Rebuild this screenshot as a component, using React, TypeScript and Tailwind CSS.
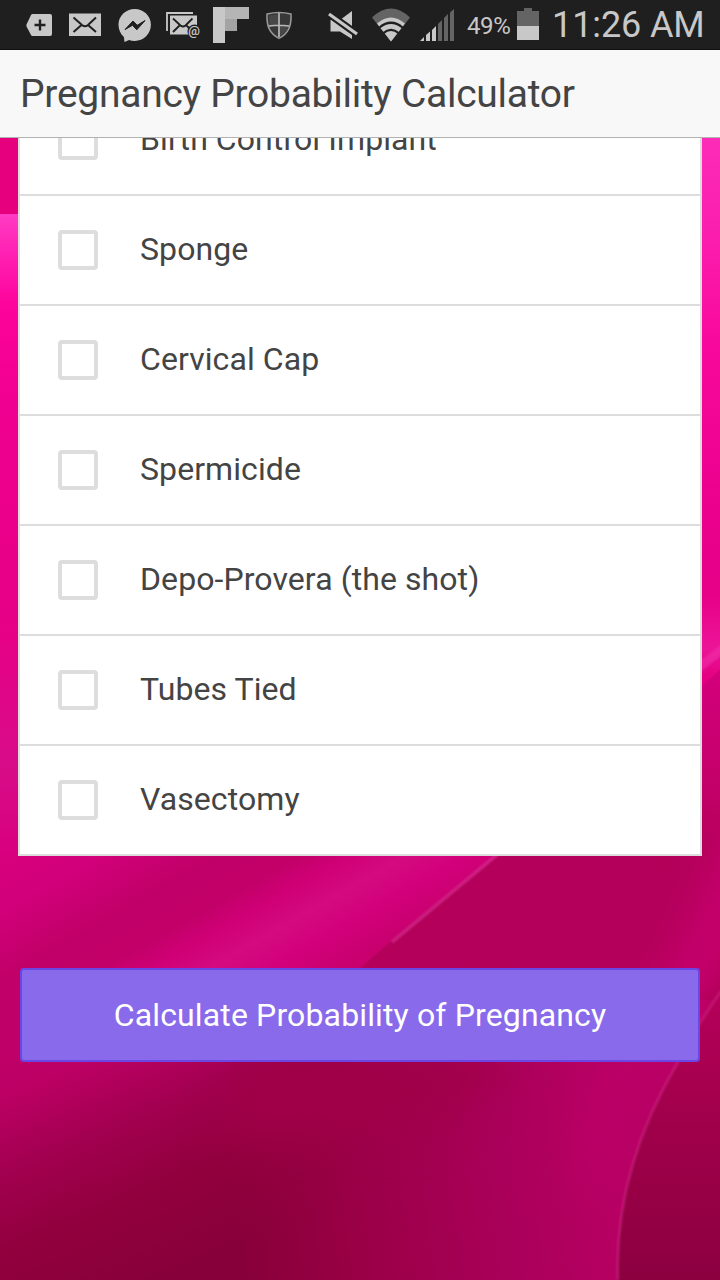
import { useState } from 'react';

const METHODS = [
  'Birth Control Implant',
  'Sponge',
  'Cervical Cap',
  'Spermicide',
  'Depo-Provera (the shot)',
  'Tubes Tied',
  'Vasectomy',
];

// Status bar icons share one coordinate space, each one shows its own slice
function StatusIcons() {
  return (
    <>
      <svg className="ml-[26px] shrink-0" width="26" height="50" viewBox="26 0 26 50">
        <path d="M32.500 14H50a2 2 0 0 1 2 2v18a2 2 0 0 1-2 2H32.500a2 2 0 0 1-1.500-1L26.500 26.500v-2L31 15a2 2 0 0 1 1.500-1z" fill="#c8c8c8" />
        <path d="M40 19.500v11M34.500 25h11" stroke="#1f1f1f" strokeWidth="2.400" />
      </svg>
      <svg className="ml-[17px] shrink-0" width="32" height="50" viewBox="69 0 32 50">
        <path d="M69 13.500h32v22.500H69z" fill="#c8c8c8" />
        <path d="M73.500 17.500l8.500 7.500q3 2.500 6 0l8-7.500M73.500 32l8-7M96 32l-8-7" fill="none" stroke="#1f1f1f" strokeWidth="2" />
      </svg>
      <svg className="ml-[17px] shrink-0" width="33" height="50" viewBox="118 0 33 50">
        <path d="M134.700 9c9 0 16.200 7 16.200 15.800S143.700 41 134.700 41c-2 0-3.800-.4-5.600-1l-4.600 2-.6-5c-3.400-2.900-5.400-7.300-5.400-12.200C118.500 16 125.700 9 134.700 9z" fill="#c8c8c8" />
        <path d="M125 29.500l8-8.500 4.200 4.300 7.800-4.700-8.200 9.200-4.300-4.500z" fill="#1f1f1f" stroke="#1f1f1f" strokeWidth="1" />
      </svg>
      <svg className="ml-[15px] shrink-0" width="35" height="50" viewBox="166 0 35 50">
        <path d="M167 31V13h26" fill="none" stroke="#c8c8c8" strokeWidth="1.800" />
        <path d="M170 15.500h27v19h-27z" fill="#c8c8c8" />
        <path d="M173 18.500l7.500 7q2.500 2 5 0l7-7M173 32l7-7M193 32l-7-7" fill="none" stroke="#1f1f1f" strokeWidth="1.800" />
        <circle cx="194.500" cy="31.500" r="7" fill="#1f1f1f" />
        <text x="194.200" y="35" textAnchor="middle" fontSize="13" fontWeight="600" fill="#c8c8c8" className="font-['Roboto',sans-serif]">@</text>
      </svg>
      <svg className="ml-[12px] shrink-0" width="36" height="50" viewBox="213 0 36 50">
        <path d="M213 7h12v36h-12z" fill="#c8c8c8" />
        <path d="M225 7h24v12h-24z" fill="#b5b5b5" />
        <path d="M225 19h12v12h-12z" fill="#a3a3a3" />
      </svg>
      <svg className="ml-[17px] shrink-0" width="26" height="50" viewBox="266 0 26 50">
        <path d="M267 14q12-3 24 0c.6 12-2.500 19.500-12 24.300-9.500-4.800-12.600-12.300-12-24.300z" fill="#383838" stroke="#989898" strokeWidth="1.500" />
        <path d="M269 15.500l10-1v11h-9.500zM279 25.500h9.500q-2 7-9.500 11z" fill="#484848" />
        <path d="M279 13v24M269 26q10-1.500 20 0" fill="none" stroke="#b8b8b8" strokeWidth="1.700" />
      </svg>
      <svg className="ml-[36px] shrink-0" width="30" height="50" viewBox="328 0 30 50">
        <path d="M330.500 20H340l12-9v28l-12-7.500h-9.500z" fill="#c8c8c8" />
        <path d="M327 12.500L359 35.500" stroke="#1f1f1f" strokeWidth="7.500" />
        <path d="M329 14L357 34" stroke="#c8c8c8" strokeWidth="3.200" />
      </svg>
      <svg className="ml-[14px] shrink-0" width="38" height="50" viewBox="372 0 38 50">
        <path d="M391 41.500L372 17.500Q391 -.5 410 17.500z" fill="#646464" />
        <path d="M391 41.500L377 23.500Q391 11.500 405 23.500z" fill="#c8c8c8" />
        <g fill="none" stroke="#1f1f1f" strokeWidth="2.200">
          <path d="M379.500 27.500Q391 18 402.500 27.500" />
          <path d="M383 33.300Q391 26.500 399 33.300" />
        </g>
      </svg>
      <svg className="ml-[10px] shrink-0" width="34" height="50" viewBox="420 0 34 50">
        <path d="M420 41l4-4v4zM426 41v-6l4-3.500V41zM432 41V30l4-4v15z" fill="#c8c8c8" />
        <path d="M438 41V24l4-4v21zM444 41V18l4-4v27zM450 41V12.500l4-3.500v32z" fill="#646464" />
      </svg>
    </>
  );
}

function StatusBar() {
  return (
    <div className="flex h-[50px] shrink-0 items-center overflow-hidden border-b border-[#111] bg-[#1f1f1f] text-[#c8c8c8]">
      <StatusIcons />
      <span className="ml-[13px] w-[44px] whitespace-nowrap pt-[2px] text-[24px] leading-[50px] tracking-[-0.4px]">49%</span>
      <svg className="ml-[6px] shrink-0" width="22" height="50" viewBox="517 0 22 50">
        <path d="M524 8h8v3h7v15h-22V11h7z" fill="#646464" />
        <path d="M517 26h22v14h-22z" fill="#c8c8c8" />
      </svg>
      <span className="ml-[13px] whitespace-nowrap text-[36px] leading-[48px] font-normal tracking-[-0.1px]">11:26 AM</span>
    </div>
  );
}

// Pink silk wallpaper behind the scrolling content
function Wallpaper() {
  return (
    <svg className="absolute inset-0" width="720" height="1280" viewBox="0 0 720 1280" preserveAspectRatio="none">
      <defs>
        <linearGradient id="left" gradientUnits="userSpaceOnUse" x1="0" y1="214" x2="0" y2="960">
          <stop offset="0" stopColor="#ff3cc4" />
          <stop offset=".05" stopColor="#ff22b4" />
          <stop offset=".12" stopColor="#fd049c" />
          <stop offset=".25" stopColor="#f00090" />
          <stop offset=".55" stopColor="#e60086" />
          <stop offset=".74" stopColor="#d80c88" />
          <stop offset=".86" stopColor="#d8007e" />
          <stop offset="1" stopColor="#bd0068" />
        </linearGradient>
        <linearGradient id="right" gradientUnits="userSpaceOnUse" x1="0" y1="138" x2="0" y2="680">
          <stop offset="0" stopColor="#fc2cb8" />
          <stop offset=".2" stopColor="#fb1cac" />
          <stop offset=".38" stopColor="#f8089c" />
          <stop offset=".7" stopColor="#ea008c" />
          <stop offset=".84" stopColor="#e60088" />
          <stop offset=".94" stopColor="#ec1498" />
          <stop offset="1" stopColor="#e2007e" />
        </linearGradient>
        <linearGradient id="mid" gradientUnits="userSpaceOnUse" x1="0" y1="680" x2="0" y2="1000">
          <stop offset="0" stopColor="#d2007a" />
          <stop offset=".5" stopColor="#bd0062" />
          <stop offset="1" stopColor="#b0005a" />
        </linearGradient>
        <linearGradient id="silk" gradientUnits="userSpaceOnUse" x1="0" y1="850" x2="135" y2="1086">
          <stop offset="0" stopColor="#d8007e" />
          <stop offset=".2" stopColor="#d2007a" />
          <stop offset=".42" stopColor="#c00068" />
          <stop offset=".56" stopColor="#c20068" />
          <stop offset=".66" stopColor="#d00076" />
          <stop offset=".76" stopColor="#d40a80" />
          <stop offset=".88" stopColor="#d2007a" />
          <stop offset="1" stopColor="#c8006e" />
        </linearGradient>
        <linearGradient id="low" gradientUnits="userSpaceOnUse" x1="40" y1="1020" x2="150" y2="1280">
          <stop offset="0" stopColor="#c00069" />
          <stop offset=".2" stopColor="#bc0064" />
          <stop offset=".45" stopColor="#a20050" />
          <stop offset=".7" stopColor="#92003e" />
          <stop offset="1" stopColor="#88003a" />
        </linearGradient>
        <linearGradient id="sweep" gradientUnits="userSpaceOnUse" x1="230" y1="1160" x2="610" y2="1110">
          <stop offset="0" stopColor="#980042" stopOpacity="0" />
          <stop offset=".3" stopColor="#9a0046" />
          <stop offset=".7" stopColor="#aa005a" />
          <stop offset="1" stopColor="#b80064" />
        </linearGradient>
        <linearGradient id="corner" gradientUnits="userSpaceOnUse" x1="0" y1="1000" x2="0" y2="1280">
          <stop offset="0" stopColor="#b4005a" />
          <stop offset=".45" stopColor="#a0004a" />
          <stop offset="1" stopColor="#8c0040" />
        </linearGradient>
        <filter id="soft" x="-50%" y="-50%" width="200%" height="200%" colorInterpolationFilters="sRGB">
          <feGaussianBlur stdDeviation="22" />
        </filter>
        <filter id="fine" x="-50%" y="-50%" width="200%" height="200%" colorInterpolationFilters="sRGB">
          <feGaussianBlur stdDeviation="1.2" />
        </filter>
      </defs>
      <rect width="720" height="1280" fill="url(#mid)" />
      {/* bottom folds */}
      <path d="M0 960H720V1280H0z" fill="url(#low)" />
      <path d="M230 1000H720V1280H230z" fill="url(#sweep)" />
      <g filter="url(#soft)">
        <path d="M250 1055H530L420 1130L220 1140z" fill="#a00048" />
        <path d="M360 820H760V1010Q640 1030 330 1000z" fill="#b4005a" />
        <path d="M650 1040Q585 1100 596 1190" fill="none" stroke="#be0068" strokeWidth="28" />
        <path d="M750 840Q710 950 656 1036" fill="none" stroke="#ca0072" strokeWidth="40" />
      </g>
      <path d="M720 990Q700 1020 678 1062Q614 1170 618 1280H720z" fill="url(#corner)" />
      <path d="M722 990Q700 1020 678 1062Q614 1170 618 1280" fill="none" stroke="#d02c88" strokeOpacity=".55" strokeWidth="2.500" filter="url(#fine)" />
      {/* left fold with its lit crease */}
      <path d="M0 820H536L496 856Q440 900 390 942L358 970V1000H0z" fill="url(#silk)" />
      <path d="M392 942Q445 898 498 854" fill="none" stroke="#e03aa0" strokeOpacity=".6" strokeWidth="3" filter="url(#fine)" />
      {/* side strips next to the list */}
      <path d="M0 138h18v76H0z" fill="#e6007e" />
      <path d="M0 214h18v642H0z" fill="url(#left)" />
      <path d="M702 138h18v532l-18 16z" fill="url(#right)" />
      <path d="M698 668l26-20" stroke="#f030a8" strokeOpacity=".6" strokeWidth="9" filter="url(#fine)" />
    </svg>
  );
}

export default function App() {
  const [selected, setSelected] = useState<string[]>([]);

  const toggle = (name: string) => {
    setSelected((prev) => (prev.includes(name) ? prev.filter((n) => n !== name) : [...prev, name]));
  };

  return (
    <div className="relative flex h-[1280px] w-[720px] flex-col overflow-hidden bg-[#b0005a] font-['Roboto',sans-serif]">
      <Wallpaper />
      <div className="relative flex min-h-0 flex-1 flex-col">
        <StatusBar />
        <header className="flex h-[88px] shrink-0 items-center border-b border-[#b2b2b2] bg-[#f8f8f8] pl-5">
          <h1 className="whitespace-nowrap text-[39px] leading-[48px] tracking-[-0.27px] text-[#444]">
            Pregnancy Probability Calculator
          </h1>
        </header>

        <main className="flex min-h-0 flex-1 flex-col justify-start overflow-hidden">
          {/* list is scrolled so the first row sits partly under the header */}
          <div className="mx-[18px] -mt-[54px] shrink-0 border-2 border-[#ddd] bg-white">
            {METHODS.map((name) => (
              <label
                key={name}
                className="flex h-[110px] items-center border-b-2 border-[#ddd] pl-[38px] last:h-[108px] last:border-b-0"
              >
                <input
                  type="checkbox"
                  checked={selected.includes(name)}
                  onChange={() => toggle(name)}
                  className="size-10 shrink-0 appearance-none rounded-[4px] border-4 border-[#ddd] bg-white checked:bg-[#886aea]"
                />
                <span className="ml-[42px] whitespace-nowrap pb-[2px] text-[32px] leading-[40px] tracking-[0.08px] text-[#444]">
                  {name}
                </span>
              </label>
            ))}
          </div>

          <button className="mx-5 mt-[112px] h-[94px] shrink-0 rounded-[4px] border-2 border-[#6b46e5] bg-[#886aea] text-[32px] tracking-[0.14px] text-white">
            Calculate Probability of Pregnancy
          </button>
        </main>
      </div>
    </div>
  );
}
